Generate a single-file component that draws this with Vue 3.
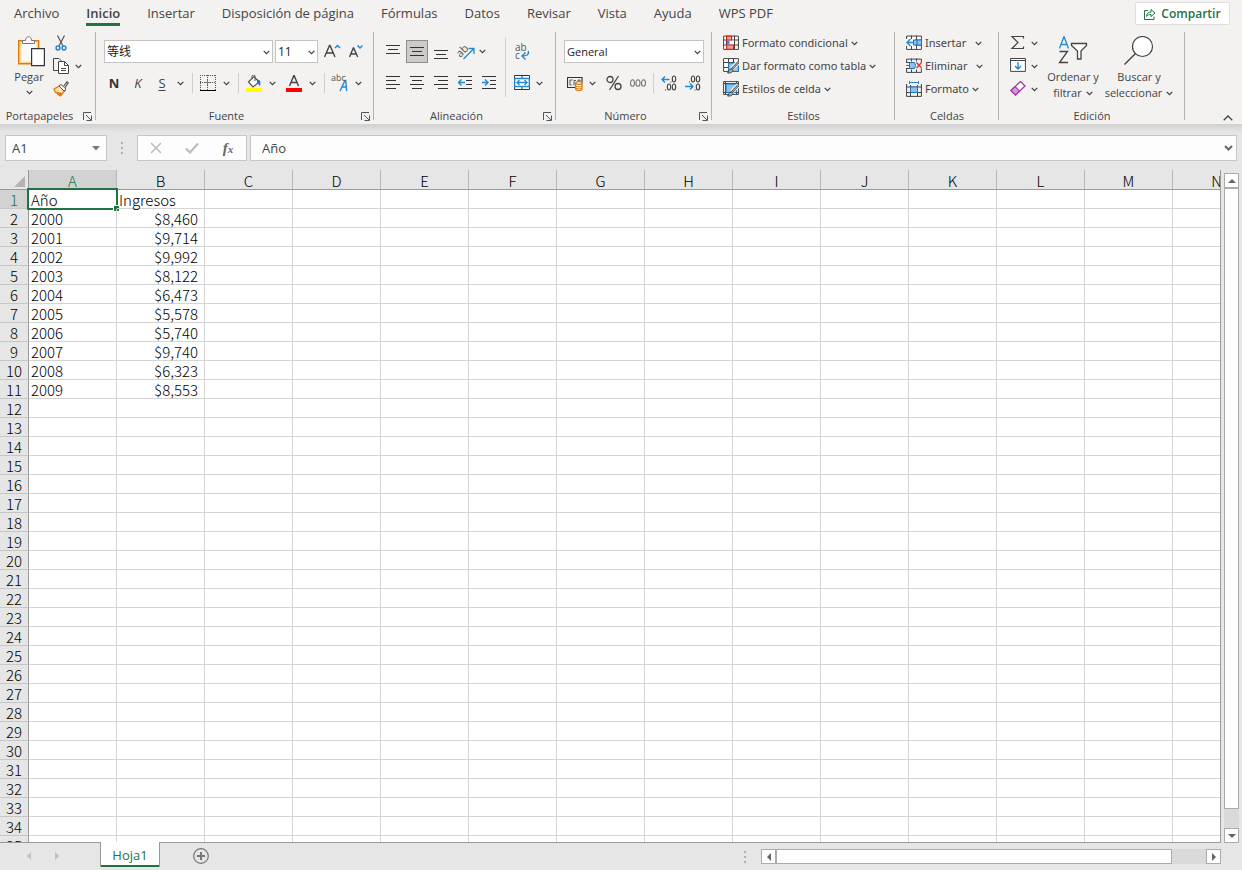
<script setup>
import { ref, computed, onMounted, onBeforeUnmount } from 'vue'

const tabs = ['Archivo', 'Inicio', 'Insertar', 'Disposición de página', 'Fórmulas', 'Datos', 'Revisar', 'Vista', 'Ayuda', 'WPS PDF']
const activeTab = ref('Inicio')

const view = ref({ width: window.innerWidth, height: window.innerHeight })
const measure = () => { view.value = { width: window.innerWidth, height: window.innerHeight } }
onMounted(() => window.addEventListener('resize', measure))
onBeforeUnmount(() => window.removeEventListener('resize', measure))

const letters = 'ABCDEFGHIJKLMNOPQRSTUVWXYZ'.split('')
const columns = computed(() => letters.slice(0, Math.ceil((view.value.width - 50) / 88)))
const rowCount = computed(() => Math.ceil((view.value.height - 217) / 19))

const cells = {
  A1: 'Año', B1: 'Ingresos',
  A2: '2000', B2: '$8,460',
  A3: '2001', B3: '$9,714',
  A4: '2002', B4: '$9,992',
  A5: '2003', B5: '$8,122',
  A6: '2004', B6: '$6,473',
  A7: '2005', B7: '$5,578',
  A8: '2006', B8: '$5,740',
  A9: '2007', B9: '$9,740',
  A10: '2008', B10: '$6,323',
  A11: '2009', B11: '$8,553'
}
const selected = ref({ col: 'A', row: 1 })
const address = computed(() => selected.value.col + selected.value.row)
const content = computed(() => cells[address.value] || '')
const isNumber = (text) => !!text && text.startsWith('$')

const styleItems = [
  { icon: 'i-conditional', label: 'Formato condicional' },
  { icon: 'i-astable', label: 'Dar formato como tabla' },
  { icon: 'i-cellstyle', label: 'Estilos de celda' }
]
const cellItems = [
  { icon: 'i-insert', label: 'Insertar', wide: true },
  { icon: 'i-delete', label: 'Eliminar', wide: true },
  { icon: 'i-format', label: 'Formato', wide: false }
]
const editItems = [
  { icon: 'i-sum', label: 'Autosuma' },
  { icon: 'i-filldown', label: 'Rellenar' },
  { icon: 'i-eraser', label: 'Borrar' }
]
</script>

<template>
  <svg class="defs" aria-hidden="true">
    <symbol id="i-chev" viewBox="0 0 7 5"><path d="M.7.9 3.5 3.6 6.3.9" fill="none" stroke="#444" stroke-width="1.3" /></symbol>
    <symbol id="i-launch" viewBox="0 0 9 9"><path d="M.5 8V.5H8M3 3l5 5M8.500 3.500v5h-5" fill="none" stroke="#555" /></symbol>
    <symbol id="i-paste" viewBox="0 0 34 32">
      <path d="M6.700 4.700h20v23h-20z" fill="#f9dc94" stroke="#e07a10" stroke-width="1.400" />
      <path d="M9.500 6.500h15v19h-15z" fill="#fafafa" />
      <path d="M10.500 7.500v-3h3c0-5 6-5 6 0h3v3z" fill="#fff" stroke="#777" />
      <path d="M19.600 12.600h12.800v17H19.600z" fill="#fff" stroke="#333" stroke-width="1.200" />
    </symbol>
    <symbol id="i-cut" viewBox="0 0 16 16">
      <path d="M4.500.500l5.500 10.500M11.500.500 6 11" fill="none" stroke="#555" stroke-width="1.200" />
      <circle cx="5" cy="13" r="1.900" fill="none" stroke="#2488d0" stroke-width="1.500" /><circle cx="11" cy="13" r="1.900" fill="none" stroke="#2488d0" stroke-width="1.500" />
    </symbol>
    <symbol id="i-copy" viewBox="0 0 17 17">
      <path d="M5 12.500H.500v-12H6L8.500 3" fill="none" stroke="#444" />
      <path d="M5.500 3.500h6l4 4v8h-10z" fill="#fff" stroke="#444" /><path d="M11.500 3.500v4h4M8 10.500h5M8 12.500h5" fill="none" stroke="#444" />
    </symbol>
    <symbol id="i-brush" viewBox="0 0 16 16">
      <path d="M1 8 7 4.500l5 5-4.500 5.500-2.500-1.500-1-1.500-1.500-.500z" fill="#fbe0b0" stroke="#e07a10" stroke-width="1.300" />
      <path d="M2.500 10.500l7 1.500-2 3z" fill="#e07a10" />
      <path d="M6 5 8 3.500l5 4.500-2 2z" fill="#fff" stroke="#555" /><path d="M10.500 5.500 14 .800l1.200 1-3.200 5" fill="#fff" stroke="#555" stroke-width="1.200" />
    </symbol>
    <symbol id="i-grow" viewBox="0 0 18 16">
      <path d="M.500 13 5.500 1.500h.500l5 11.500M2.200 9h7" fill="none" stroke="#444" stroke-width="1.400" /><path d="M11 4 13.500 1.500l2.500 2.500" fill="none" stroke="#2488d0" stroke-width="1.500" />
    </symbol>
    <symbol id="i-shrink" viewBox="0 0 18 16">
      <path d="M.500 13 4.300 4h.400l4 9M2 10h5.200" fill="none" stroke="#444" stroke-width="1.400" /><path d="M8.500 1.500 11 4l2.500-2.500" fill="none" stroke="#2488d0" stroke-width="1.500" />
    </symbol>
    <symbol id="i-borders" viewBox="0 0 16 16">
      <path d="M.500 0v15M15.500 0v15M0 .500h16M0 7.500h16M7.500 0v15" fill="none" stroke="#555" stroke-dasharray="1 1" /><path d="M5 7.500h5M7.500 5v5" stroke="#777" fill="none" /><path d="M0 15.500h16" stroke="#000" />
    </symbol>
    <symbol id="i-fill" viewBox="0 0 16 17">
      <path d="M2.500 7 8 1.500 13 7l-6 5z" fill="#fff" stroke="#555" stroke-width="1.200" /><path d="M6 4V1.500a1.500 1.500 0 0 1 3 0V6" fill="none" stroke="#555" />
      <path d="M11 4.500c3 0 4 2 3 6.500-2-1-1-3-3-4z" fill="#1f6fb5" /><path d="M0 13h16v4H0z" fill="#ff0" />
    </symbol>
    <symbol id="i-color" viewBox="0 0 16 17">
      <path d="M3.500 11 7.800.800h.400L12.500 11M5 7.500h6" fill="none" stroke="#444" stroke-width="1.400" /><path d="M0 13h16v4H0z" fill="#f00" />
    </symbol>
    <symbol id="i-top" viewBox="0 0 14 14"><path d="M0 .500h14M2 4.500h10M0 8.500h14" stroke="#333" /></symbol>
    <symbol id="i-middle" viewBox="0 0 14 14"><path d="M0 2.500h14M2 6.500h10M0 10.500h14" stroke="#333" /></symbol>
    <symbol id="i-bottom" viewBox="0 0 14 14"><path d="M0 5.500h14M2 9.500h10M0 13.500h14" stroke="#333" /></symbol>
    <symbol id="i-left" viewBox="0 0 14 14"><path d="M0 .500h14M0 4.500h10M0 8.500h14M0 12.500h10" stroke="#333" /></symbol>
    <symbol id="i-center" viewBox="0 0 14 14"><path d="M0 .500h14M2 4.500h10M0 8.500h14M2 12.500h10" stroke="#333" /></symbol>
    <symbol id="i-right" viewBox="0 0 14 14"><path d="M0 .500h14M4 4.500h10M0 8.500h14M4 12.500h10" stroke="#333" /></symbol>
    <symbol id="i-outdent" viewBox="0 0 14 14"><path d="M0 .500h14M8 4.500h6M8 8.500h6M0 12.500h14" stroke="#333" /><path d="M7 6.500H.800M3.500 3.500l-3 3 3 3" fill="none" stroke="#2488d0" stroke-width="1.400" /></symbol>
    <symbol id="i-indent" viewBox="0 0 14 14"><path d="M0 .500h14M8 4.500h6M8 8.500h6M0 12.500h14" stroke="#333" /><path d="M0 6.500h6M3 3.500l3 3-3 3" fill="none" stroke="#2488d0" stroke-width="1.400" /></symbol>
    <symbol id="i-merge" viewBox="0 0 16 16">
      <path d="M.500.500h15v14H.500zM8 .500v14" fill="#fff" stroke="#333" /><path d="M.700 3.500h14.600v8H.700z" fill="#fff" stroke="#2488d0" stroke-width="1.400" />
      <path d="M3 7.500h10M5.500 5 3 7.500 5.500 10M10.500 5 13 7.500 10.500 10" fill="none" stroke="#2488d0" stroke-width="1.300" />
    </symbol>
    <symbol id="i-currency" viewBox="0 0 16 16">
      <path d="M8 12.500H.500v-10h14.500V7" fill="none" stroke="#333" stroke-width="1.200" /><path d="M5.500 5H3v5h1.500M7 10.500V5.500h2M11 7V5h2v1.500" fill="none" stroke="#555" />
      <path d="M8.700 8v6c0 2 6.300 2 6.300 0V8z" fill="#fff" stroke="#e07000" stroke-width="1.200" /><ellipse cx="11.850" cy="8" rx="3.200" ry="1.300" fill="#fff" stroke="#e07000" stroke-width="1.200" /><path d="M8.700 11c1 1.200 5.300 1.200 6.300 0M8.700 13c1 1.200 5.300 1.200 6.300 0" fill="none" stroke="#e07000" />
    </symbol>
    <symbol id="i-percent" viewBox="0 0 16 16"><path d="M12.500 1 3.500 15" stroke="#444" stroke-width="1.300" /><circle cx="4" cy="4.500" r="3" fill="none" stroke="#444" stroke-width="1.300" /><circle cx="12" cy="11.500" r="3" fill="none" stroke="#444" stroke-width="1.300" /></symbol>
    <symbol id="i-thousand" viewBox="0 0 18 16"><g fill="none" stroke="#777" stroke-width="1.100"><ellipse cx="3.500" cy="8" rx="2" ry="3.300" /><ellipse cx="9" cy="8" rx="2" ry="3.300" /><ellipse cx="14.500" cy="8" rx="2" ry="3.300" /></g></symbol>
    <symbol id="i-moredec" viewBox="0 0 16 16">
      <g fill="none" stroke="#444" stroke-width="1.100"><ellipse cx="13" cy="4" rx="1.700" ry="3" /><ellipse cx="8" cy="12" rx="1.700" ry="3" /><ellipse cx="13" cy="12" rx="1.700" ry="3" /></g><path d="M9.500 6.500h1v1h-1zM4 14.500h1v1H4z" fill="#444" />
      <path d="M8.500 4.500H1M4 1.500l-3 3 3 3" fill="none" stroke="#2488d0" stroke-width="1.400" />
    </symbol>
    <symbol id="i-lessdec" viewBox="0 0 16 16">
      <g fill="none" stroke="#444" stroke-width="1.100"><ellipse cx="8" cy="4" rx="1.700" ry="3" /><ellipse cx="13" cy="4" rx="1.700" ry="3" /><ellipse cx="13" cy="12" rx="1.700" ry="3" /></g><path d="M4 6.500h1v1H4zM9.500 14.500h1v1h-1z" fill="#444" />
      <path d="M0 11.500h7.500M5 8.500l3 3-3 3" fill="none" stroke="#2488d0" stroke-width="1.400" />
    </symbol>
    <symbol id="i-conditional" viewBox="0 0 16 15">
      <path d="M.600.600h14.800v13.300H.600zM0 4.500h16M0 9.500h16M3.500 0v14M11.500 0v14" fill="#fff" stroke="#444" /><path d="M4 5h7v4H4z" fill="#fff" />
      <path d="M3.600.600h5v3.900h-5zM3.600 9.500h7v4.400h-7z" fill="#f79a92" stroke="#d8251c" stroke-width="1.200" /><path d="M4 5h2.500v4H4z" fill="#3a8ed4" />
    </symbol>
    <symbol id="i-astable" viewBox="0 0 16 16">
      <path d="M.600.600h14.800v12.800H.600zM0 4.500h16M0 9.500h16M5.500 0v14M10.500 0v14" fill="#fff" stroke="#444" /><path d="M5.500 5h10v8.500h-10z" fill="#8cc2ec" stroke="#1e74bf" />
      <path d="M15.500 4 9 10.500" stroke="#fff" stroke-width="4.500" /><path d="M15.500 4 9 11" stroke="#555" stroke-width="2.400" /><path d="M15.500 4 9.500 10.500" stroke="#ddd" stroke-width=".8" /><path d="M4.500 15c1.500-.800 1-4 3.800-4s2.500 4.500-3.800 4z" fill="#aaa" stroke="#444" />
    </symbol>
    <symbol id="i-cellstyle" viewBox="0 0 16 16">
      <path d="M.600.600h14.800v12.800H.600z" fill="#fff" stroke="#444" /><path d="M2.500 0v14M0 2.500h16M0 11.500h16M13.500 0v14" stroke="#444" /><path d="M3 3h10.500v8.500H3z" fill="#8cc2ec" stroke="#1e74bf" />
      <path d="M15.500 4 9 10.500" stroke="#fff" stroke-width="4.500" /><path d="M15.500 4 9 11" stroke="#555" stroke-width="2.400" /><path d="M15.500 4 9.500 10.500" stroke="#ddd" stroke-width=".8" /><path d="M4.500 15c1.500-.800 1-4 3.800-4s2.500 4.500-3.800 4z" fill="#aaa" stroke="#444" />
    </symbol>
    <symbol id="i-insert" viewBox="0 0 16 15">
      <path d="M.600.600h14.800v13.300H.600zM0 4.500h16M0 9.500h16M5.500 0v14M10.500 0v14" fill="#fff" stroke="#444" /><path d="M0 3.500h9v7H0z" fill="#f3f2f1" /><path d="M7.500 4.500h8v5h-8zM11 4.500v5" fill="#8cc2ec" stroke="#1e74bf" />
      <path d="M8 7H1M4.500 3.500 1 7l3.500 3.500" fill="none" stroke="#2488d0" stroke-width="1.400" />
    </symbol>
    <symbol id="i-delete" viewBox="0 0 16 15">
      <path d="M.600 4V.600h14.800V4M.600 10v3.900h14.800V10M5.500 0v3M10.500 0v3M5.500 11v3M10.500 11v3M0 4h4M0 10h4" fill="none" stroke="#444" /><path d="M3.500 4h5l1 3-1 3h-5z" fill="#8cc2ec" stroke="#1e74bf" /><path d="M0 7h3" stroke="#1e74bf" />
      <path d="m10.500 4 5 5.500M15.500 4l-5 5.500" stroke="#e8362c" stroke-width="1.400" />
    </symbol>
    <symbol id="i-format" viewBox="0 0 16 16">
      <path d="M.600 3v12.400h14.800V3M0 6h16M0 11.500h16M4.500 4v11.500M11.500 4v11.500" fill="none" stroke="#444" /><path d="M4.500 6h7v5.500h-7z" fill="#8cc2ec" stroke="#1e74bf" /><path d="M3.500 1.500h9M3.500 0v3M12.500 0v3" fill="none" stroke="#2488d0" />
    </symbol>
    <symbol id="i-sum" viewBox="0 0 16 16"><path d="M13.500 3.500V1.500H2l6 6-6 6h11.500v-2" fill="none" stroke="#444" stroke-width="1.200" /></symbol>
    <symbol id="i-filldown" viewBox="0 0 16 16"><path d="M.600.500h14.800v12.900H.600z" fill="#fff" stroke="#444" /><path d="M0 2.500h16" stroke="#444" /><path d="M8 4v7M5 8l3 3 3-3" fill="none" stroke="#2488d0" stroke-width="1.400" /></symbol>
    <symbol id="i-eraser" viewBox="0 0 16 16"><path d="M10.500.500 15 5 5.500 14 1 9.500z" fill="#fff" stroke="#a03aa8" stroke-width="1.300" /><path d="m5 5.500 4.500 4.500-4 4L1 9.500z" fill="#d79add" stroke="#a03aa8" stroke-width="1.200" /></symbol>
    <symbol id="i-sort" viewBox="0 0 30 32">
      <path d="M1.500 12.500 5.800 1h.400l4.300 11.500M3 8.500h6" fill="none" stroke="#2488d0" stroke-width="1.300" /><path d="M1.500 15.500h8l-8 11H10" fill="none" stroke="#444" stroke-width="1.300" />
      <path d="M13.500 7.500h15v2l-5.500 5.500v8h-3.500v-8l-6-5.500z" fill="#fff" stroke="#444" stroke-width="1.300" />
    </symbol>
    <symbol id="i-find" viewBox="0 0 30 32"><circle cx="18.500" cy="10.500" r="10" fill="#fff" stroke="#444" stroke-width="1.200" /><path d="M11.500 17.500.500 28.500" stroke="#444" stroke-width="1.400" /></symbol>
    <symbol id="i-share" viewBox="0 0 12 12"><path d="M4 2.500H.500v9h9.500V8.500" fill="none" stroke="#217346" /><path d="M2.500 8.500c0-3 2-4.500 4.500-4.500V1.500L11 5 7 8.500V6.500c-2 0-3.500.500-4.500 2z" fill="none" stroke="#217346" /></symbol>
  </svg>

  <div class="app">
    <header class="ribbon">
      <nav class="tabs" aria-label="Cinta">
        <button v-for="t in tabs" :key="t" class="tab" :class="{ active: t === activeTab }" @click="activeTab = t">{{ t }}</button>
        <button class="share"><svg width="12" height="12"><use href="#i-share" /></svg>Compartir</button>
      </nav>

      <div class="groups">
        <section class="group clipboard">
          <div class="body">
            <button class="big paste"><svg width="34" height="32"><use href="#i-paste" /></svg><span>Pegar</span><svg class="chevron" width="7" height="5"><use href="#i-chev" /></svg></button>
            <div class="stack">
              <button class="edit" aria-label="Cortar"><svg width="16" height="16"><use href="#i-cut" /></svg></button>
              <button class="edit" aria-label="Copiar"><svg width="17" height="17"><use href="#i-copy" /></svg><svg class="chevron" width="7" height="5"><use href="#i-chev" /></svg></button>
              <button class="edit" aria-label="Copiar formato"><svg width="16" height="16"><use href="#i-brush" /></svg></button>
            </div>
          </div>
          <footer><span>Portapapeles</span><button class="launch" aria-label="Opciones del portapapeles"><svg width="9" height="9"><use href="#i-launch" /></svg></button></footer>
        </section>

        <section class="group font">
          <div class="body lines">
            <div class="row upper">
              <label class="combo family"><select aria-label="Fuente"><option>等线</option></select><svg width="7" height="5"><use href="#i-chev" /></svg></label>
              <label class="combo size"><select aria-label="Tamaño de fuente"><option>11</option></select><svg width="7" height="5"><use href="#i-chev" /></svg></label>
              <button class="ic grow" aria-label="Aumentar tamaño"><svg width="18" height="16"><use href="#i-grow" /></svg></button>
              <button class="ic" aria-label="Reducir tamaño"><svg width="18" height="16"><use href="#i-shrink" /></svg></button>
            </div>
            <div class="row lower">
              <button class="ic letter bold">N</button>
              <button class="ic letter italic">K</button>
              <button class="ic letter underline">S</button>
              <button class="chev" aria-label="Subrayado"><svg width="7" height="5"><use href="#i-chev" /></svg></button>
              <i class="sep"></i>
              <button class="ic" aria-label="Bordes"><svg width="16" height="16"><use href="#i-borders" /></svg></button>
              <button class="chev" aria-label="Más bordes"><svg width="7" height="5"><use href="#i-chev" /></svg></button>
              <i class="sep"></i>
              <button class="ic" aria-label="Color de relleno"><svg width="16" height="17"><use href="#i-fill" /></svg></button>
              <button class="chev" aria-label="Más colores de relleno"><svg width="7" height="5"><use href="#i-chev" /></svg></button>
              <button class="ic spaced" aria-label="Color de fuente"><svg width="16" height="17"><use href="#i-color" /></svg></button>
              <button class="chev" aria-label="Más colores de fuente"><svg width="7" height="5"><use href="#i-chev" /></svg></button>
              <i class="sep"></i>
              <button class="ic" aria-label="Guía fonética"><svg class="glyph" width="18" height="18"><path d="M9 17 14 6.500h.700l1 10.500M11 13h4.500" fill="none" stroke="#2488d0" stroke-width="1.400" /><text x="0" y="7">abc</text></svg></button>
              <button class="chev" aria-label="Más guía fonética"><svg width="7" height="5"><use href="#i-chev" /></svg></button>
            </div>
          </div>
          <footer><span>Fuente</span><button class="launch" aria-label="Opciones de fuente"><svg width="9" height="9"><use href="#i-launch" /></svg></button></footer>
        </section>

        <section class="group align">
          <div class="body">
            <div class="lines">
              <div class="row upper spread">
                <button class="ib" aria-label="Alinear arriba"><svg width="14" height="14"><use href="#i-top" /></svg></button>
                <button class="ib pressed" aria-label="Alinear en el medio"><svg width="14" height="14"><use href="#i-middle" /></svg></button>
                <button class="ib" aria-label="Alinear abajo"><svg width="14" height="14"><use href="#i-bottom" /></svg></button>
                <button class="ib split turn" aria-label="Orientación"><svg class="glyph slanted" width="17" height="16"><text x="-2" y="10" transform="rotate(-45 5 7)">ab</text><path d="M5.500 15 15.500 5M10.500 4.500h5.500v5.500" fill="none" stroke="#2488d0" stroke-width="1.300" /></svg><svg class="chevron" width="7" height="5"><use href="#i-chev" /></svg></button>
              </div>
              <div class="row lower spread">
                <button class="ib" aria-label="Izquierda"><svg width="14" height="14"><use href="#i-left" /></svg></button>
                <button class="ib" aria-label="Centrar"><svg width="14" height="14"><use href="#i-center" /></svg></button>
                <button class="ib" aria-label="Derecha"><svg width="14" height="14"><use href="#i-right" /></svg></button>
                <button class="ib" aria-label="Disminuir sangría"><svg width="14" height="14"><use href="#i-outdent" /></svg></button>
                <button class="ib" aria-label="Aumentar sangría"><svg width="14" height="14"><use href="#i-indent" /></svg></button>
              </div>
            </div>
            <i class="sep tall"></i>
            <div class="lines">
              <div class="row upper"><button class="ib" aria-label="Ajustar texto"><svg class="glyph wrap" width="14" height="18"><text x="0" y="8">ab</text><text x="0" y="16">c</text><path d="M13.300 8c1 4-2 5-6 5M10.500 9.500l-3.500 3.500 3.500 3.500" fill="none" stroke="#2488d0" stroke-width="1.400" /></svg></button></div>
              <div class="row lower"><button class="ib split" aria-label="Combinar y centrar"><svg width="16" height="16"><use href="#i-merge" /></svg><svg class="chevron" width="7" height="5"><use href="#i-chev" /></svg></button></div>
            </div>
          </div>
          <footer><span>Alineación</span><button class="launch" aria-label="Opciones de alineación"><svg width="9" height="9"><use href="#i-launch" /></svg></button></footer>
        </section>

        <section class="group number">
          <div class="body lines">
            <div class="row upper"><label class="combo format"><select aria-label="Formato de número"><option>General</option></select><svg width="7" height="5"><use href="#i-chev" /></svg></label></div>
            <div class="row lower spread">
              <button class="ib split money" aria-label="Moneda"><svg width="16" height="16"><use href="#i-currency" /></svg><svg class="chevron" width="7" height="5"><use href="#i-chev" /></svg></button>
              <button class="ib" aria-label="Porcentaje"><svg width="16" height="16"><use href="#i-percent" /></svg></button>
              <button class="ib" aria-label="Millares"><svg width="18" height="16"><use href="#i-thousand" /></svg></button>
              <i class="sep slim"></i>
              <button class="ib" aria-label="Más decimales"><svg width="16" height="16"><use href="#i-moredec" /></svg></button>
              <button class="ib" aria-label="Menos decimales"><svg width="16" height="16"><use href="#i-lessdec" /></svg></button>
            </div>
          </div>
          <footer><span>Número</span><button class="launch" aria-label="Opciones de número"><svg width="9" height="9"><use href="#i-launch" /></svg></button></footer>
        </section>

        <section class="group styles">
          <div class="body list">
            <button v-for="s in styleItems" :key="s.label" class="item"><svg width="16" height="16"><use :href="'#' + s.icon" /></svg><span>{{ s.label }}</span><svg class="chevron" width="7" height="5"><use href="#i-chev" /></svg></button>
          </div>
          <footer><span>Estilos</span></footer>
        </section>

        <section class="group cellgroup">
          <div class="body list">
            <button v-for="s in cellItems" :key="s.label" class="item" :class="{ wide: s.wide }"><svg width="16" height="16"><use :href="'#' + s.icon" /></svg><span>{{ s.label }}</span><svg class="chevron" width="7" height="5"><use href="#i-chev" /></svg></button>
          </div>
          <footer><span>Celdas</span></footer>
        </section>

        <section class="group editing">
          <div class="body">
            <div class="stack">
              <button v-for="e in editItems" :key="e.label" class="edit" :aria-label="e.label"><svg width="16" height="16"><use :href="'#' + e.icon" /></svg><svg class="chevron" width="7" height="5"><use href="#i-chev" /></svg></button>
            </div>
            <button class="big sort"><svg width="30" height="32"><use href="#i-sort" /></svg><span>Ordenar y</span><span>filtrar <svg class="chevron" width="7" height="5"><use href="#i-chev" /></svg></span></button>
            <button class="big find"><svg width="30" height="32"><use href="#i-find" /></svg><span>Buscar y</span><span>seleccionar <svg class="chevron" width="7" height="5"><use href="#i-chev" /></svg></span></button>
          </div>
          <footer><span>Edición</span></footer>
        </section>
        <button class="collapse" aria-label="Contraer la cinta"><svg width="10" height="6" viewBox="0 0 10 6"><path d="M.700 5.300 5 1l4.300 4.300" fill="none" stroke="#444" stroke-width="1.300" /></svg></button>
      </div>
    </header>

    <div class="formulabar">
      <div class="namebox">
        <input aria-label="Cuadro de nombres" :value="address" readonly />
        <button aria-label="Nombres definidos"><svg width="8" height="5"><path d="M0 0h8L4 4.500z" fill="#777" /></svg></button>
      </div>
      <i class="dots"></i>
      <div class="fxbox">
        <button aria-label="Cancelar"><svg width="12" height="12"><path d="m1 1 10 10M11 1 1 11" stroke="#bdbdbd" stroke-width="1.600" /></svg></button>
        <button aria-label="Introducir"><svg width="14" height="12"><path d="m1 6.500 4 4L13 1.500" fill="none" stroke="#bdbdbd" stroke-width="2.200" /></svg></button>
        <button class="fx" aria-label="Insertar función">f<sub>x</sub></button>
      </div>
      <div class="formula">
        <input aria-label="Barra de fórmulas" :value="content" readonly />
        <button aria-label="Expandir"><svg width="9" height="6"><path d="M1 1l3.500 3.500L8 1" fill="none" stroke="#666" stroke-width="2" /></svg></button>
      </div>
    </div>

    <main class="sheet">
      <div class="grid">
        <table :style="{ width: 29 + columns.length * 88 + 'px' }">
          <colgroup><col class="rowcol" /><col v-for="c in columns" :key="c" class="datacol" /></colgroup>
          <thead>
            <tr><th class="corner"><svg width="11" height="11"><path d="M11 0v11H0z" fill="#b2b2b2" /></svg></th><th v-for="c in columns" :key="c" scope="col" :class="{ on: c === selected.col }">{{ c }}</th></tr>
          </thead>
          <tbody>
            <tr v-for="r in rowCount" :key="r">
              <th scope="row" :class="{ on: r === selected.row }">{{ r }}</th>
              <td v-for="c in columns" :key="c" :class="{ num: isNumber(cells[c + r]), cursor: c + r === address }" @click="selected = { col: c, row: r }">{{ cells[c + r] }}<i v-if="c + r === address" class="handle"></i></td>
            </tr>
          </tbody>
        </table>
      </div>
      <div class="vscroll">
        <button aria-label="Arriba"><svg width="8" height="4"><path d="M0 4h8L4 0z" fill="#666" /></svg></button>
        <div class="track"><div class="thumb"></div></div>
        <button aria-label="Abajo"><svg width="8" height="4"><path d="M0 0h8L4 4z" fill="#666" /></svg></button>
      </div>
    </main>

    <footer class="sheetbar">
      <button class="nav" aria-label="Hoja anterior"><svg width="4" height="8"><path d="M4 0v8L0 4z" fill="#c0c0c0" /></svg></button>
      <button class="nav" aria-label="Hoja siguiente"><svg width="4" height="8"><path d="M0 0v8l4-4z" fill="#c0c0c0" /></svg></button>
      <button class="sheettab">Hoja1</button>
      <button class="add" aria-label="Hoja nueva"><svg width="16" height="16"><circle cx="8" cy="8" r="7.300" fill="none" stroke="#777" stroke-width="1.200" /><path d="M8 4v8M4 8h8" stroke="#777" stroke-width="2" /></svg></button>
      <i class="dots"></i>
      <div class="hscroll">
        <button aria-label="Izquierda"><svg width="4" height="8"><path d="M4 0v8L0 4z" fill="#666" /></svg></button>
        <div class="track"><div class="thumb"></div></div>
        <button aria-label="Derecha"><svg width="4" height="8"><path d="M0 0v8l4-4z" fill="#666" /></svg></button>
      </div>
    </footer>
  </div>
</template>

<style>
body { margin: 0; overflow: hidden; }
</style>

<style scoped>
* { box-sizing: border-box; }
.defs { position: absolute; width: 0; height: 0; }
.app { display: flex; flex-direction: column; height: 100vh; background: #e6e6e6; color: #444; font: 11px/16px "Open Sans", "Noto Sans", "Noto Sans CJK SC", sans-serif; }
button, input, select { font: inherit; color: inherit; background: none; border: 0; padding: 0; margin: 0; border-radius: 0; }
svg { flex: none; display: block; }
input:focus, select:focus { outline: none; }

.ribbon { flex: none; background: #f3f2f1; }
.tabs { display: flex; gap: 27px; height: 27px; padding-left: 14px; padding-right: 12px; }
.tab { height: 26px; font-size: 13px; line-height: 22px; padding-top: 2px; padding-bottom: 2px; white-space: nowrap; }
.tab.active { padding-bottom: 0; border-bottom: 3px solid #217346; font-weight: 600; }
.share { display: flex; align-items: center; justify-content: center; gap: 5px; margin: 2px 0 0 auto; width: 95px; height: 23px; background: #fff; border: 1px solid #e1dfdd; border-radius: 2px; color: #217346; font-size: 12px; font-weight: 600; }

.groups { display: flex; padding-top: 5px; height: 97px; }
.group { flex: none; display: flex; flex-direction: column; background: linear-gradient(#b5b3b1, #b5b3b1) right top / 1px 88px no-repeat; }
.body { display: flex; height: 76px; }
.group > footer { display: flex; height: 16px; }
.group > footer span { flex: 1; text-align: center; }
.launch { width: 17px; height: 16px; padding: 0 0 0 4px; }
.clipboard { width: 96px; }
.font { width: 278px; }
.align { width: 182px; }
.number { width: 156px; }
.styles { width: 183px; }
.cellgroup { width: 104px; }
.editing { width: 186px; }

.big { display: flex; flex-direction: column; align-items: center; height: 72px; padding-top: 4px; white-space: nowrap; }
.big span { display: flex; align-items: center; gap: 4px; }
.big > svg:first-child { margin-bottom: 1px; }
.paste { width: 34px; margin-left: 12px; }
.paste .chevron { margin-top: 5px; }
.stack { display: flex; flex-direction: column; gap: 1px; }
.clipboard .stack { margin-left: 7px; }
.edit { display: flex; align-items: center; gap: 5px; height: 22px; }

.lines { display: flex; flex-direction: column; }
.font .body, .number .body, .align .body { padding-left: 8px; }
.row { display: flex; align-items: center; }
.upper { height: 23px; margin-top: 8px; }
.lower { height: 22px; margin-top: 9px; }
.spread { gap: 2px; }
.combo { position: relative; display: flex; height: 23px; background: #fff; border: 1px solid #c6c4c2; color: #222; }
.combo select { appearance: none; width: 100%; padding: 0 2px; }
.combo svg { position: absolute; right: 2px; top: 9px; pointer-events: none; }
.family { width: 169px; margin-right: 2px; }
.family select { font-size: 12px; }
.size { width: 43px; margin-right: 5px; }
.size select { font-size: 12px; }
.format { width: 140px; }
.ic { display: flex; align-items: center; justify-content: center; width: 20px; height: 22px; }
.grow { margin-right: 5px; }
.letter { margin-right: 4px; font-size: 13px; }
.bold { font-weight: 700; color: #333; }
.italic { font-style: italic; }
.underline { text-decoration: underline; text-underline-offset: 2px; margin-right: 0; }
.spaced { margin-left: 4px; }
.chev { display: flex; align-items: center; justify-content: center; width: 16px; height: 22px; }
.sep { flex: none; width: 1px; height: 20px; margin: 0 5px 0 4px; background: #d0cecc; }
.sep.tall { height: 59px; margin: 6px 5px 0 5px; }
.sep.slim { margin: 0 2px; }
.ib { display: flex; align-items: center; justify-content: center; width: 22px; height: 23px; }
.pressed { background: #cdcbc9; border: 1px solid #8f8d8b; }
.split { width: 35px; gap: 6px; }
.turn { gap: 4px; }
.money { width: 37px; justify-content: flex-start; padding-left: 3px; }
.glyph { overflow: visible; fill: #555; font-size: 9px; }
.slanted { font-size: 11px; }
.wrap { font-size: 10px; }

.list { flex-direction: column; gap: 1px; }
.item { display: flex; align-items: center; gap: 3px; height: 22px; padding-left: 11px; white-space: nowrap; font-family: "Noto Sans", sans-serif; }
.wide .chevron { margin-left: 6px; }
.editing .stack { width: 31px; margin-left: 11px; }
.sort { width: 64px; }
.find { width: 68px; }
.collapse { margin: 81px 9px 0 auto; height: 10px; }

.formulabar { flex: none; display: flex; height: 46px; padding: 11px 5px 0; background: linear-gradient(#cfcfcf, #e6e6e6 8px); font-size: 13px; }
.namebox, .fxbox, .formula { display: flex; align-items: center; height: 26px; background: #fdfdfd; border: 1px solid #c6c6c6; }
.namebox { width: 102px; padding: 0 6px; }
.namebox input { flex: 1; min-width: 0; }
.dots { width: 3px; height: 12px; background: repeating-linear-gradient(#b0b0b0 0 2px, transparent 2px 5px); }
.formulabar .dots { margin: 7px 14px 0 14px; width: 2px; }
.fxbox { width: 110px; justify-content: space-around; }
.fxbox button { width: 36px; display: flex; justify-content: center; align-items: baseline; }
.fx { font: italic bold 15px/18px "Liberation Serif", serif; color: #666; }
.fx sub { font-size: 11px; }
.formula { flex: 1; margin-left: 3px; padding: 0 3px 0 11px; }
.formula input { flex: 1; }

.sheet { flex: 1; min-height: 0; display: flex; padding-right: 3px; }
.grid { flex: 1; min-width: 0; overflow: hidden; background: #fff; border-right: 1px solid #999; border-bottom: 1px solid #999; font: 300 15px/16px "Noto Sans CJK SC", sans-serif; color: #000; }
table { table-layout: fixed; border-collapse: separate; border-spacing: 0; }
.rowcol { width: 29px; }
.datacol { width: 88px; }
th { height: 19px; padding: 2px 0 0; font-weight: 300; text-align: center; background: #e6e6e6; border-right: 1px solid #999; border-bottom: 1px solid #c6c6c6; }
thead th { height: 20px; padding-top: 3px; border-right-color: #b8b8b8; border-bottom-color: #999; }
thead .corner { padding: 4px 3px 0 14px; border-right-color: #999; }
th.on { background: #d2d2d2; color: #217346; }
td { position: relative; height: 19px; padding: 2px 0 0 2px; border-right: 1px solid #d4d4d4; border-bottom: 1px solid #d4d4d4; white-space: nowrap; }
td.num { text-align: right; padding: 2px 6px 0 0; }
td.cursor::before { content: ""; position: absolute; inset: -2px; border: 2px solid #217346; }
.handle { position: absolute; right: -3px; bottom: -3px; width: 6px; height: 6px; background: #217346; border-top: 1px solid #fff; border-left: 1px solid #fff; }

.vscroll { flex: none; display: flex; flex-direction: column; width: 15px; margin: 3px 0 0 3px; }
.vscroll button, .hscroll button { flex: none; display: flex; align-items: center; justify-content: center; width: 15px; height: 15px; background: #fff; border: 1px solid #ababab; }
.track { flex: 1; background: #dadada; }
.thumb { background: #fff; border: 1px solid #ababab; }
.vscroll .thumb { height: 97%; }

.sheetbar { flex: none; display: flex; height: 27px; padding: 0 21px 0 27px; }
.nav { width: 4px; height: 26px; margin-right: 24px; }
.sheettab { width: 60px; height: 25px; margin: -1px 0 0 17px; background: #fff; border: solid #999; border-width: 0 1px; box-shadow: inset 0 -2px #217346; color: #217346; font-size: 13px; z-index: 1; }
.add { margin-left: 33px; height: 26px; }
.sheetbar .dots { margin: 8px 15px 0 auto; width: 2px; }
.hscroll { display: flex; width: 37vw; margin-top: 6px; height: 15px; }
.hscroll .thumb { height: 15px; width: 92%; }
</style>
